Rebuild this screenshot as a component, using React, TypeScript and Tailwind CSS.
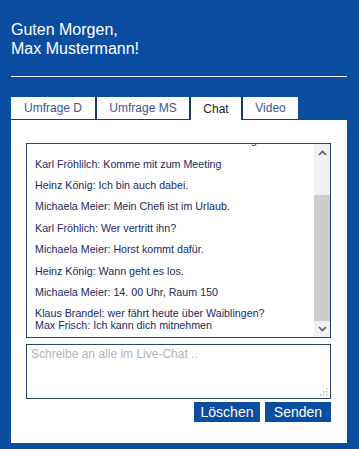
import React from "react";

const messages = [
  "Michaela Meier: Wer kommt alles zum Meeting mit?",
  "Karl Fröhlilch: Komme mit zum Meeting",
  "Heinz König: Ich bin auch dabei.",
  "Michaela Meier: Mein Chefi ist im Urlaub.",
  "Karl Fröhlich: Wer vertritt ihn?",
  "Michaela Meier: Horst kommt dafür.",
  "Heinz König: Wann geht es los.",
  "Michaela Meier: 14. 00 Uhr, Raum 150",
  "Klaus Brandel: wer fährt heute über Waiblingen?\nMax Frisch: Ich kann dich mitnehmen",
];

const tabs = [
  { label: "Umfrage D", w: "w-[84px]" },
  { label: "Umfrage MS", w: "w-[92px]" },
  { label: "Chat", w: "w-[50px]", active: true },
  { label: "Video", w: "w-[55px]" },
];

function Chevron({ up }: { up?: boolean }) {
  return (
    <svg width="9" height="6" viewBox="0 0 9 6">
      <path
        d={up ? "M1 5 L4.5 1.5 L8 5" : "M1 1 L4.5 4.5 L8 1"}
        fill="none"
        stroke="#5a5a5a"
        strokeWidth="1.6"
      />
    </svg>
  );
}

function App() {
  return (
    <div className="w-[359px] h-[449px] bg-[#0b4ea1] font-['Liberation_Sans',Arial,sans-serif] overflow-hidden">
      <div className="pl-[11px] pr-[12px] pt-[20px]">
        <h1 className="text-white text-[16px] leading-[19px]">
          Guten Morgen,
          <br />
          Max Mustermann!
        </h1>
        <div className="mt-[18px] h-px bg-white" />

        {/* tabs */}
        <div className="mt-[20px] inline-flex gap-[2px] bg-[#1b3a66] align-top">
          {tabs.map((t) => (
            <div
              key={t.label}
              className={
                t.active
                  ? `${t.w} h-[23px] bg-white flex items-center justify-center text-[12px] text-[#222]`
                  : `${t.w} h-[23px] bg-white border-b border-[#1b3a66] flex items-center justify-center text-[12px] text-[#3f5591]`
              }
            >
              {t.label}
            </div>
          ))}
        </div>

        {/* panel */}
        <div className="h-[323px] bg-white pt-[23px] pl-[15px] pr-[16px]">
          <div className="h-[195px] border border-[#2a4468] flex">
            <div className="flex-1 overflow-hidden pl-[8px]">
              <div className="-mt-[10px] flex flex-col gap-[9.4px] text-[10.7px] leading-[12px] text-[#1b2a60] whitespace-pre-line">
                {messages.map((m, i) => (
                  <div key={i} className={i === 0 ? "mb-[2.3px]" : ""}>
                    {m}
                  </div>
                ))}
              </div>
            </div>
            <div className="w-[16px] bg-[#f0f0f0] flex flex-col">
              <div className="h-[17px] flex items-center justify-center">
                <Chevron up />
              </div>
              <div className="h-[34px]" />
              <div className="h-[126px] bg-[#cdcdcd]" />
              <div className="flex-1 flex items-center justify-center">
                <Chevron />
              </div>
            </div>
          </div>

          <div className="relative mt-[6px]">
            <textarea
              className="block w-full h-[55px] border border-[#2a4468] resize-none outline-none px-[4px] pt-[2px] text-[12px] leading-[14px] text-[#333] placeholder:text-[#b4b4b4]"
              placeholder="Schreibe an alle im Live-Chat .."
            />
            <svg
              className="absolute right-[3px] bottom-[3px]"
              width="8"
              height="8"
              viewBox="0 0 8 8"
            >
              <rect x="6" y="0" width="1.5" height="1.5" fill="#bdbdbd" />
              <rect x="3" y="3" width="1.5" height="1.5" fill="#bdbdbd" />
              <rect x="6" y="3" width="1.5" height="1.5" fill="#bdbdbd" />
              <rect x="0" y="6" width="1.5" height="1.5" fill="#bdbdbd" />
              <rect x="3" y="6" width="1.5" height="1.5" fill="#bdbdbd" />
              <rect x="6" y="6" width="1.5" height="1.5" fill="#bdbdbd" />
            </svg>
          </div>

          <div className="mt-[3px] flex justify-end gap-[5px]">
            <button className="w-[66px] h-[20px] bg-[#0b4ea1] text-white text-[14px] leading-[20px]">
              Löschen
            </button>
            <button className="w-[66px] h-[20px] bg-[#0b4ea1] text-white text-[14px] leading-[20px]">
              Senden
            </button>
          </div>
        </div>
      </div>
    </div>
  );
}

export default App;
